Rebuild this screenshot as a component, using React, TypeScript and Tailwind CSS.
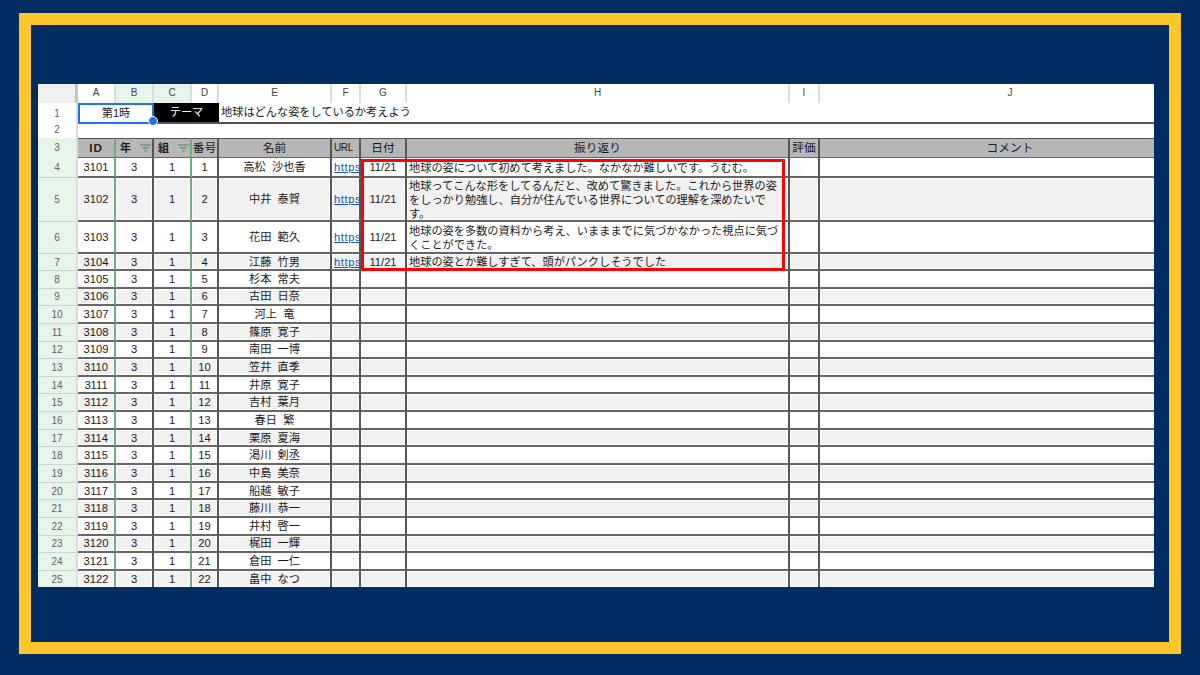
const FONT = "font-['Liberation_Sans','Noto_Sans_CJK_JP',sans-serif]";
const COLS = "grid-cols-[40px_38px_38px_38px_27px_113px_29px_46px_383px_30px_382px]";

const names = ["高松 沙也香","中井 泰賀","花田 範久","江藤 竹男","杉本 常夫","古田 日奈","河上 竜","篠原 寛子","南田 一博","笠井 直季","井原 寛子","吉村 葉月","春日 繁","栗原 夏海","渇川 剣丞","中島 美奈","船越 敏子","藤川 恭一","井村 啓一","梶田 一輝","倉田 一仁","畠中 なつ"];
const comments: Record<number, string> = {
  0: "地球の姿について初めて考えました。なかなか難しいです。うむむ。",
  1: "地球ってこんな形をしてるんだと、改めて驚きました。これから世界の姿をしっかり勉強し、自分が住んでいる世界についての理解を深めたいです。",
  2: "地球の姿を多数の資料から考え、いまままでに気づかなかった視点に気づくことができた。",
  3: "地球の姿とか難しすぎて、頭がパンクしそうでした",
};
const heights = ["h-[20px]","h-[44px]","h-[32px]","h-[17px]"];

function Filter() {
  return (
    <svg width="11" height="8" viewBox="0 0 11 8" className="shrink-0">
      <path d="M0 1h11M2.5 4h6M4.5 7h2" stroke="#4f7f60" strokeWidth="1" fill="none" />
    </svg>
  );
}

function ColHead({ label, active }: { label: string; active?: boolean }) {
  return (
    <div className={`flex items-center justify-center pb-[2px] text-[10px] text-[#444] border-r-2 border-[#dcdcdc] ${active ? "bg-[#e7f4ea]" : "bg-white"}`}>{label}</div>
  );
}

function HeadCell({ label, border = "border-r-[#555]", filter, className = "" }: { label: string; border?: string; filter?: boolean; className?: string }) {
  return (
    <div className={`flex items-center justify-center gap-[9px] bg-[#b7b7b7] border-r-2 border-t border-b border-t-[#555] border-b-[#666] ${border} text-[#1a1a1a] ${filter ? "font-bold text-[11px] pl-[3px]" : "text-[11.7px]"} ${className}`}>
      <span>{label}</span>
      {filter && <Filter />}
    </div>
  );
}

function Cell({ children, odd, border = "border-r-[#555]", className = "" }: { children?: React.ReactNode; odd: boolean; border?: string; className?: string }) {
  return (
    <div className={`flex items-center min-w-0 overflow-hidden border-b-2 border-b-[#666] border-r-2 ${border} ${odd ? "bg-[#f1f1f1] shadow-[inset_0_0_0_1px_#ffffff]" : "bg-white"} pt-[1px] text-[11.2px] leading-[15px] text-[#1a1a1a] ${className}`}>
      {children}
    </div>
  );
}

function Row({ i }: { i: number }) {
  const odd = i % 2 === 1;
  const h = heights[i] ?? "h-[17.65px]";
  const green = "border-r-[#6aaf80]";
  const num = i + 4;
  return (
    <div className={`grid ${COLS} ${h}`}>
      <div className="flex items-center justify-center bg-[#e7f4ea] border-r-2 border-r-[#dcdcdc] border-b border-b-[#d0d0d0] text-[10px] text-[#5f6368]">{num}</div>
      <Cell odd={odd} border={green} className="justify-center">{3101 + i}</Cell>
      <Cell odd={odd} className="justify-center">3</Cell>
      <Cell odd={odd} border={green} className="justify-center">1</Cell>
      <Cell odd={odd} className="justify-center">{i + 1}</Cell>
      <Cell odd={odd} className="justify-center"><span className="whitespace-pre">{names[i].replace(" ", "  ")}</span></Cell>
      <Cell odd={odd} className="pl-[2px]">
        {i < 4 && <span className="text-[#1155cc] underline tracking-[0.6px]">https</span>}
      </Cell>
      <Cell odd={odd} className="justify-center">{i < 4 ? "11/21" : ""}</Cell>
      <Cell odd={odd} className="pl-[2px] pr-[6px]">{comments[i] ? <span className="block leading-[14px]">{comments[i]}</span> : null}</Cell>
      <Cell odd={odd} />
      <Cell odd={odd} border="border-r-transparent" />
    </div>
  );
}

export default function App() {
  const cols: [string, boolean?][] = [["A"],["B",true],["C",true],["D"],["E"],["F"],["G"],["H"],["I"],["J"]];
  return (
    <div className={`w-[1200px] h-[675px] bg-[#012d62] pt-[13px] px-[19px] ${FONT}`}>
      <div className="w-[1162px] h-[641px] border-[12px] border-[#fec62a] pt-[59px] pl-[7px]">
        <div className="relative w-[1116px] h-[503px] overflow-hidden bg-white">
          <div className={`grid ${COLS} h-[19px]`}>
            <div className="bg-[#f0f0f0] border-r-[3px] border-[#c4c4c4]" />
            {cols.map(([l, a]) => <ColHead key={l} label={l} active={a} />)}
          </div>

          <div className={`grid ${COLS} h-[18px]`}>
            <div className="flex items-center justify-center border-r-2 border-[#dcdcdc] text-[10px] text-[#5f6368]">1</div>
            <div className="col-span-2 flex items-center justify-center border-2 border-[#1a73e8] text-[11.2px] text-[#1a1a1a]">第1時</div>
            <div className="col-span-2 flex items-center justify-center bg-black text-white text-[11.2px] border-b-2 border-[#555]">テーマ</div>
            <div className="col-span-6 flex items-center pl-[2px] text-[11.2px] text-[#1a1a1a] border-b-2 border-[#555]">地球はどんな姿をしているか考えよう</div>
          </div>

          <div className={`grid ${COLS} h-[17px]`}>
            <div className="flex items-center justify-center border-r-2 border-[#dcdcdc] text-[10px] text-[#5f6368]">2</div>
            <div className="col-span-10" />
          </div>

          <div className={`grid ${COLS} h-[18px]`}>
            <div className="flex items-center justify-center bg-[#e7f4ea] border-r-2 border-[#dcdcdc] text-[10px] text-[#5f6368]">3</div>
            <HeadCell label="ID" border="border-r-[#6aaf80]" className="font-bold tracking-[1px] text-[#222]" />
            <HeadCell label="年" filter />
            <HeadCell label="組" filter border="border-r-[#6aaf80]" />
            <HeadCell label="番号" />
            <HeadCell label="名前" />
            <HeadCell label="URL" className="!text-[10px] tracking-[-0.4px] justify-start pl-[2px]" />
            <HeadCell label="日付" />
            <HeadCell label="振り返り" />
            <HeadCell label="評価" />
            <HeadCell label="コメント" border="border-r-transparent" />
          </div>

          <div className="h-[2px] bg-[#c4c4c4]" />

          {names.map((_, i) => <Row key={i} i={i} />)}

          <div className="absolute left-[110px] top-[32px] w-[10px] h-[10px] rounded-full bg-[#1a73e8] border border-white" />
          <div className="absolute left-[323px] top-[75px] w-[424px] h-[112px] border-[3px] border-[#ff0000]" />
        </div>
      </div>
    </div>
  );
}
